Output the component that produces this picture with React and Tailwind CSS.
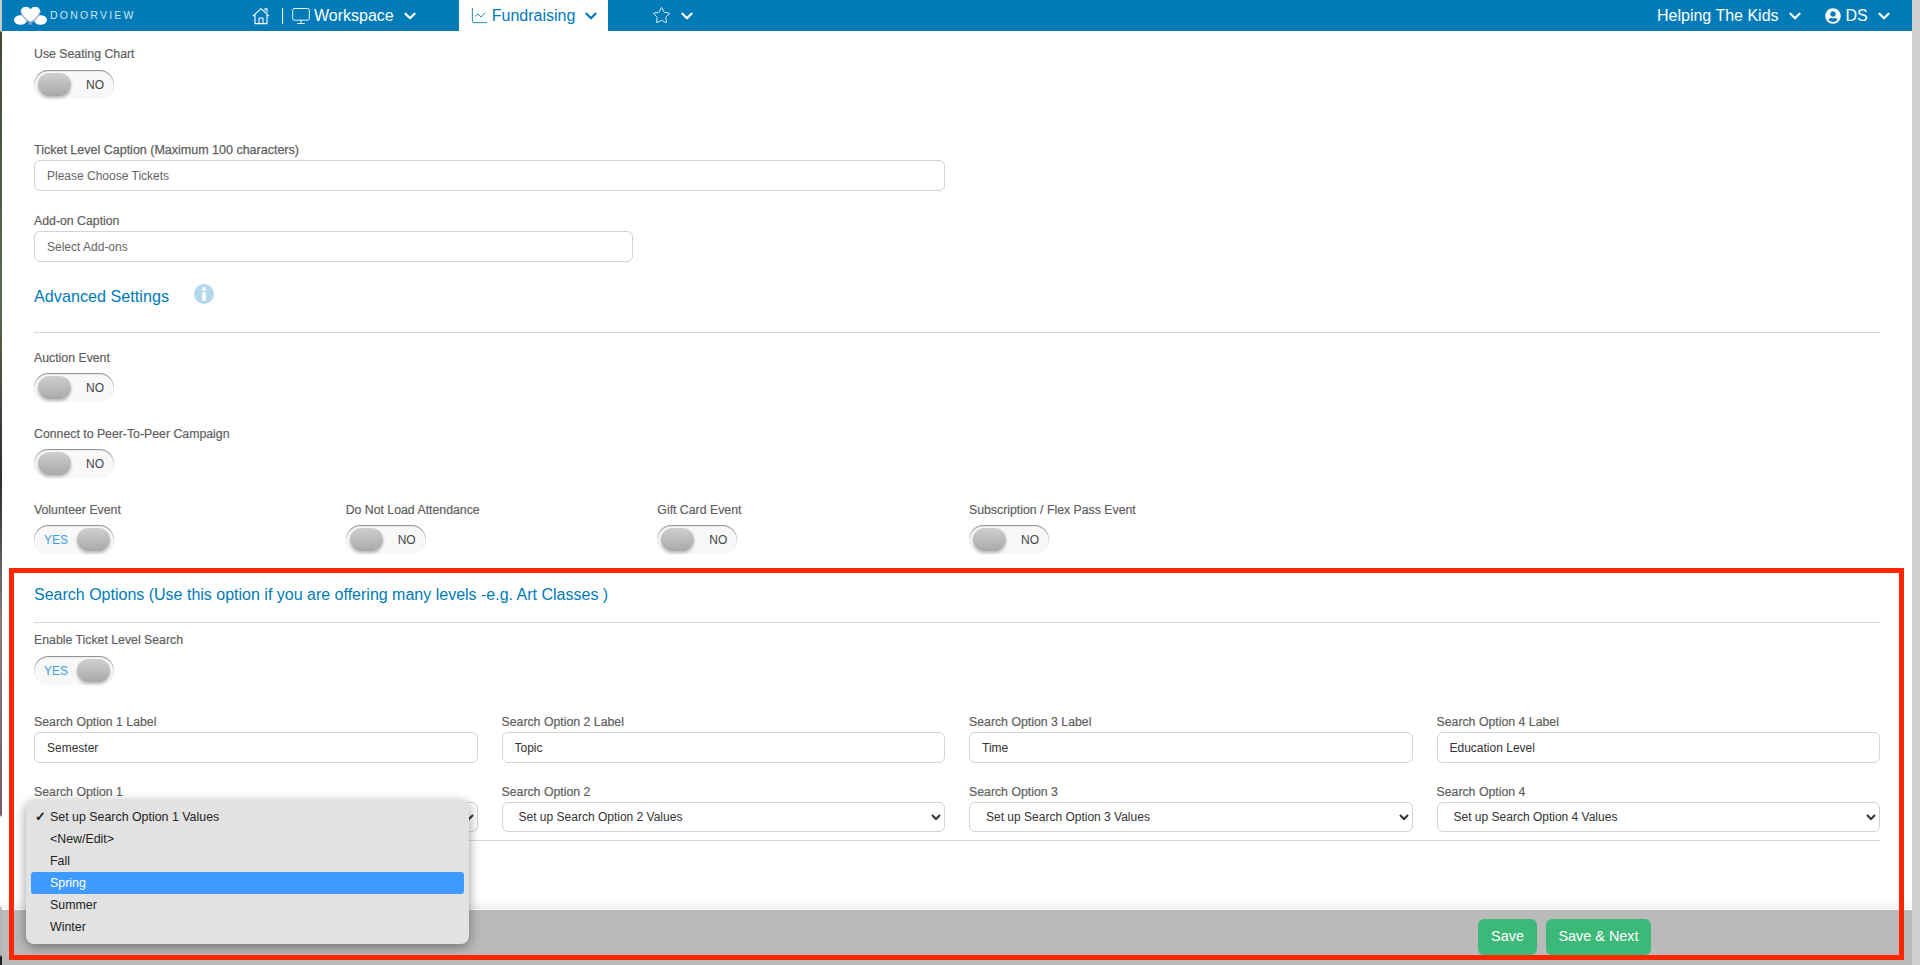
import { ChevronDown, Monitor, ChartLine, Star } from "lucide-react";
import { FaUserCircle } from "react-icons/fa";

const font = { fontFamily: '"Liberation Sans", Arial, sans-serif' };

const HomeIcon = () => (
  <svg width="18" height="18" viewBox="0 0 18 18" fill="none" stroke="white" strokeWidth="1.1" strokeLinejoin="round">
    <path d="M0.8 9.2 L9 1.6 L17.2 9.2" />
    <path d="M3 7.6 V16.6 H15 V7.6" />
    <path d="M7 16.6 V11 H11 V16.6" />
    <path d="M13 3.4 V1.8 H15 V5.6" />
  </svg>
);

const Logo = () => (
  <svg width="33" height="19" viewBox="0 0 33 19">
    <ellipse cx="6.5" cy="14" rx="6.5" ry="4.8" fill="white" />
    <ellipse cx="26.5" cy="14" rx="6.5" ry="4.8" fill="white" />
    <path d="M16.5 16 C10 12 6 8 7 4 C8 0.3 14 -0.7 16.5 3.2 C19 -0.7 25 0.3 26 4 C27 8 23 12 16.5 16 Z" fill="white" />
    <path d="M6.5 5.5 C8.5 10.5 13 15 18 18.5 M26.5 5.5 C24.5 10.5 20 15 15 18.5" fill="none" stroke="#9aa3d0" strokeWidth="1.1" />
  </svg>
);

const InfoDot = () => (
  <svg width="20" height="20" viewBox="0 0 20 20" className="ml-[25px] -mt-[4px]">
    <circle cx="10" cy="10" r="10" fill="#b5d9ec" />
    <circle cx="10" cy="5" r="1.9" fill="white" />
    <rect x="8.2" y="8.2" width="3.6" height="8.6" rx="0.6" fill="white" />
  </svg>
);

const Toggle = ({ on }) => (
  <div className="flex items-center justify-between w-20 h-[29px] rounded-full bg-[#f8f8f8] px-1 shadow-[inset_0_1px_1px_rgba(0,0,0,0.45)]">
    {on ? (
      <>
        <span className="pl-[6px] text-xs text-[#3a9fe6]">YES</span>
        <span className="w-[33px] h-[23px] rounded-full bg-linear-to-b from-[#cfcfcf] to-[#a9a9a9] shadow-[0_2px_3px_rgba(0,0,0,0.25)]" />
      </>
    ) : (
      <>
        <span className="w-[33px] h-[23px] rounded-full bg-linear-to-b from-[#cfcfcf] to-[#a9a9a9] shadow-[0_2px_3px_rgba(0,0,0,0.25)]" />
        <span className="pr-[6px] text-xs text-[#444]">NO</span>
      </>
    )}
  </div>
);

const Label = ({ children }) => (
  <div className="h-4 text-[12.3px] leading-4 text-[#5f5f5f] [-webkit-text-stroke:0.2px_#5f5f5f]">{children}</div>
);

const TextBox = ({ value, width, mt, muted }) => (
  <input
    readOnly
    value={value}
    className={`block h-[31px] ${width} ${mt} rounded-md border border-[#ced4da] bg-white px-3 text-xs ${muted ? "text-[#666]" : "text-[#333]"}`}
    style={font}
  />
);

const SelectBox = ({ n }) => (
  <select
    className="mt-[2px] block h-[30px] w-full rounded-md border border-[#ced4da] bg-white pl-3 pr-1 text-xs text-[#333]"
    style={font}
  >
    <option>Set up Search Option {n} Values</option>
  </select>
);

const App = () => {
  const labels = ["Semester", "Topic", "Time", "Education Level"];

  return (
    <div className="relative flex h-screen overflow-hidden bg-white" style={font}>
      {/* strip of desktop photo on the left */}
      <div className="w-[2px] shrink-0 bg-[linear-gradient(to_bottom,#c8c8c8_0,#c8c8c8_31px,#3f4a3a_32px,#5b6b4e_300px,#2c2c30_480px,#8a7f78_620px,#7b5a63_815px,#ffffff_817px,#ffffff_905px,#bababa_909px,#bababa_955px,#222222_957px)]" />

      <div className="flex min-w-0 flex-1 flex-col">
        {/* Navbar */}
        <nav className="flex h-[31px] shrink-0 items-center bg-[#007bb8] text-white">
          <div className="ml-3 flex w-[445px] items-center">
            <Logo />
            <span className="ml-[3px] text-[10.5px] tracking-[0.21em] text-[#cfe6f2]">DONORVIEW</span>
          </div>
        </nav>

        <main className="flex-1 px-8 pt-[15px]">
          <Label>Use Seating Chart</Label>
          <div className="mt-2"><Toggle /></div>

          <div className="mt-[43px] h-4 text-[12.5px] leading-4 text-[#5f5f5f] [-webkit-text-stroke:0.25px_#5f5f5f]">
            Ticket Level Caption (Maximum 100 characters)
          </div>
          <TextBox value="Please Choose Tickets" width="w-[911px]" mt="mt-[2px]" muted />

          <div className="mt-[22px]"><Label>Add-on Caption</Label></div>
          <TextBox value="Select Add-ons" width="w-[599px]" mt="mt-[2px]" muted />

          <div className="mt-[22px] flex h-6 items-center text-[16.2px] text-[#007bb8]">
            Advanced Settings
            <InfoDot />
          </div>
          <div className="mt-6 h-px bg-[#d8d8d8]" />

          <div className="mt-[17px]"><Label>Auction Event</Label></div>
          <div className="mt-[7px]"><Toggle /></div>

          <div className="mt-[24px]"><Label>Connect to Peer-To-Peer Campaign</Label></div>
          <div className="mt-[7px]"><Toggle /></div>

          <div className="mt-[24px] grid grid-cols-6 gap-6">
            <div><Label>Volunteer Event</Label><div className="mt-[7px]"><Toggle on /></div></div>
            <div><Label>Do Not Load Attendance</Label><div className="mt-[7px]"><Toggle /></div></div>
            <div><Label>Gift Card Event</Label><div className="mt-[7px]"><Toggle /></div></div>
            <div><Label>Subscription / Flex Pass Event</Label><div className="mt-[7px]"><Toggle /></div></div>
          </div>

          <div className="mt-[29px] h-6 text-base leading-6 text-[#007bb8]">
            Search Options (Use this option if you are offering many levels -e.g. Art Classes )
          </div>
          <div className="mt-[15px] h-px bg-[#d8d8d8]" />

          <div className="mt-[9px]"><Label>Enable Ticket Level Search</Label></div>
          <div className="mt-2"><Toggle on /></div>

          <div className="mt-[29px] grid grid-cols-4 gap-6">
            {labels.map((value, i) => (
              <div key={value}>
                <Label>Search Option {i + 1} Label</Label>
                <TextBox value={value} width="w-full" mt="mt-[2px]" />
              </div>
            ))}
          </div>

          <div className="mt-[21px] grid grid-cols-4 gap-6">
            {[1, 2, 3, 4].map((n) => (
              <div key={n}>
                <Label>Search Option {n}</Label>
                <SelectBox n={n} />
              </div>
            ))}
          </div>
          <div className="mt-2 h-px bg-[#d8d8d8]" />
        </main>

        {/* Footer */}
        <footer className="flex h-[56px] shrink-0 items-start justify-end gap-[9px] border-t border-white bg-[#bababa] pt-[9px] pr-[261px] shadow-[0_-4px_8px_rgba(0,0,0,0.08)]">
          <button className="h-9 w-[59px] rounded-md bg-[#3cb878] text-[14.4px] text-white">Save</button>
          <button className="h-9 w-[105px] rounded-md bg-[#3cb878] text-[14.4px] text-white">Save &amp; Next</button>
        </footer>
      </div>

      {/* scrollbar */}
      <div className="w-2 shrink-0 bg-[#cfcfcf]" />

      {/* open select menu */}
      <div className="absolute left-[26px] top-[800px] w-[443px] rounded-lg bg-[#e2e2e2] px-[5px] py-[6px] text-[12.4px] text-[#222] shadow-[0_3px_12px_rgba(0,0,0,0.4)]">
        {["Set up Search Option 1 Values", "<New/Edit>", "Fall", "Spring", "Summer", "Winter"].map((item, i) => (
          <div
            key={item}
            className={`relative flex h-[22px] items-center rounded-[3px] pl-[19px] ${item === "Spring" ? "bg-[#3f9bff] text-white" : ""}`}
          >
            {i === 0 && <span className="absolute left-[4px] text-[13px] font-bold">✓</span>}
            {item}
          </div>
        ))}
      </div>

      {/* red annotation box */}
      <div className="pointer-events-none absolute left-[9px] top-[568px] h-[392px] w-[1895px] border-[5px] border-[#ff2600]" />

      {/* nav items */}
      <div className="absolute left-[252px] top-0 flex h-[31px] items-center text-base text-white">
        <HomeIcon />
        <span className="ml-[12px] h-4 w-px bg-white" />
        <Monitor size={20} strokeWidth={1.1} className="ml-[8px]" />
        <span className="ml-[3px]">Workspace</span>
        <ChevronDown size={18} strokeWidth={3} className="ml-[7px]" />
        <div className="ml-[40px] flex h-[31px] w-[149px] items-center bg-white pl-[11px] text-[#007bb8]">
          <ChartLine size={19} strokeWidth={1.1} />
          <span className="ml-[3px]">Fundraising</span>
          <ChevronDown size={18} strokeWidth={3} className="ml-[7px]" />
        </div>
        <Star size={19} strokeWidth={1.1} className="ml-[44px]" />
        <ChevronDown size={18} strokeWidth={3} className="ml-[7px]" />
      </div>
      <div className="absolute left-[1657px] top-0 flex h-[31px] items-center text-base text-white">
        <span>Helping The Kids</span>
        <ChevronDown size={18} strokeWidth={3} className="ml-[7px]" />
        <FaUserCircle size={16} className="ml-[21px]" />
        <span className="ml-[5px]">DS</span>
        <ChevronDown size={18} strokeWidth={3} className="ml-[7px]" />
      </div>
    </div>
  );
};

export default App;
